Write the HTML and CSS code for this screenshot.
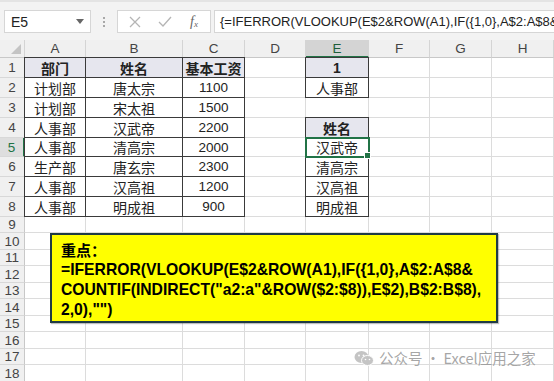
FILE: index.html
```html
<!DOCTYPE html>
<html lang="zh">
<head>
<meta charset="utf-8">
<link rel="stylesheet" href="styles.css">
</head>
<body>
<div class="app">
  <div class="toolbar">
    <div class="namebox"><span>E5</span><svg class="caret" width="8" height="5" viewBox="0 0 8 5"><path d="M0 0h8L4 5z" fill="#666"/></svg></div>
    <div class="grip"><i></i><i></i><i></i></div>
    <div class="fxbox">
      <svg width="12" height="12" viewBox="0 0 12 12"><path d="M1 1l10 10M11 1L1 11" stroke="#b5b5b5" stroke-width="1.3" fill="none"/></svg>
      <svg width="14" height="12" viewBox="0 0 14 12"><path d="M1 6l4 4 8-9" stroke="#b5b5b5" stroke-width="1.3" fill="none"/></svg>
      <span class="fx">f<sub>x</sub></span>
    </div>
    <div class="formula">{=IFERROR(VLOOKUP(E$2&amp;ROW(A1),IF({1,0},A$2:A$8&amp;COUNTIF(INDIRECT("a2:a"&amp;ROW($2:$8)),E$2),B$2:B$8),2,0),"")}</div>
  </div>

  <div class="sheet">
    <div class="corner"><svg width="10" height="10" viewBox="0 0 10 10"><path d="M10 0v10H0z" fill="#c4c4c4"/></svg></div>
    <div class="ch">A</div><div class="ch">B</div><div class="ch">C</div><div class="ch">D</div><div class="ch sel">E</div><div class="ch">F</div><div class="ch">G</div><div class="ch">H</div>

    <div class="rh">1</div><div class="c t th l tp">部门</div><div class="c t th tp">姓名</div><div class="c t th tp">基本工资</div><div class="c"></div><div class="c t th l tp n b">1</div><div class="c"></div><div class="c"></div><div class="c"></div>
    <div class="rh">2</div><div class="c t l">计划部</div><div class="c t">唐太宗</div><div class="c t n">1100</div><div class="c"></div><div class="c t l">人事部</div><div class="c"></div><div class="c"></div><div class="c"></div>
    <div class="rh">3</div><div class="c t l">计划部</div><div class="c t">宋太祖</div><div class="c t n">1500</div><div class="c"></div><div class="c"></div><div class="c"></div><div class="c"></div><div class="c"></div>
    <div class="rh">4</div><div class="c t l">人事部</div><div class="c t">汉武帝</div><div class="c t n">2200</div><div class="c"></div><div class="c t th l tp">姓名</div><div class="c"></div><div class="c"></div><div class="c"></div>
    <div class="rh rsel">5</div><div class="c t l">人事部</div><div class="c t">清高宗</div><div class="c t n">2000</div><div class="c"></div><div class="c t l active">汉武帝</div><div class="c"></div><div class="c"></div><div class="c"></div>
    <div class="rh">6</div><div class="c t l">生产部</div><div class="c t">唐玄宗</div><div class="c t n">2300</div><div class="c"></div><div class="c t l">清高宗</div><div class="c"></div><div class="c"></div><div class="c"></div>
    <div class="rh">7</div><div class="c t l">人事部</div><div class="c t">汉高祖</div><div class="c t n">1200</div><div class="c"></div><div class="c t l">汉高祖</div><div class="c"></div><div class="c"></div><div class="c"></div>
    <div class="rh">8</div><div class="c t l">人事部</div><div class="c t">明成祖</div><div class="c t n">900</div><div class="c"></div><div class="c t l">明成祖</div><div class="c"></div><div class="c"></div><div class="c"></div>
    <div class="rh">9</div><div class="c"></div><div class="c"></div><div class="c"></div><div class="c"></div><div class="c"></div><div class="c"></div><div class="c"></div><div class="c"></div>
    <div class="rh">10</div><div class="c"></div><div class="c"></div><div class="c"></div><div class="c"></div><div class="c"></div><div class="c"></div><div class="c"></div><div class="c"></div>
    <div class="rh">11</div><div class="c"></div><div class="c"></div><div class="c"></div><div class="c"></div><div class="c"></div><div class="c"></div><div class="c"></div><div class="c"></div>
    <div class="rh">12</div><div class="c"></div><div class="c"></div><div class="c"></div><div class="c"></div><div class="c"></div><div class="c"></div><div class="c"></div><div class="c"></div>
    <div class="rh">13</div><div class="c"></div><div class="c"></div><div class="c"></div><div class="c"></div><div class="c"></div><div class="c"></div><div class="c"></div><div class="c"></div>
    <div class="rh">14</div><div class="c"></div><div class="c"></div><div class="c"></div><div class="c"></div><div class="c"></div><div class="c"></div><div class="c"></div><div class="c"></div>
    <div class="rh">15</div><div class="c"></div><div class="c"></div><div class="c"></div><div class="c"></div><div class="c"></div><div class="c"></div><div class="c"></div><div class="c"></div>
    <div class="rh">16</div><div class="c"></div><div class="c"></div><div class="c"></div><div class="c"></div><div class="c"></div><div class="c"></div><div class="c"></div><div class="c"></div>
    <div class="rh">17</div><div class="c"></div><div class="c"></div><div class="c"></div><div class="c"></div><div class="c"></div><div class="c"></div><div class="c"></div><div class="c"></div>
    <div class="rh">18</div><div class="c"></div><div class="c"></div><div class="c"></div><div class="c"></div><div class="c"></div><div class="c"></div><div class="c"></div><div class="c"></div>
  </div>

  <div class="note">
    <div class="note-title">重点：</div>
    <div>=IFERROR(VLOOKUP(E$2&amp;ROW(A1),IF({1,0},A$2:A$8&amp;</div>
    <div>COUNTIF(INDIRECT("a2:a"&amp;ROW($2:$8)),E$2),B$2:B$8),</div>
    <div>2,0),"")</div>
  </div>

  <div class="watermark">
    <svg width="20" height="17" viewBox="0 0 20 17"><ellipse cx="7.5" cy="7" rx="7" ry="6" fill="#c4c4c4"/><ellipse cx="13.5" cy="10.5" rx="6" ry="5" fill="#c4c4c4" stroke="#fff" stroke-width="1"/><circle cx="5" cy="5.5" r="0.9" fill="#fff"/><circle cx="9.5" cy="5.5" r="0.9" fill="#fff"/><circle cx="11.5" cy="9.5" r="0.8" fill="#fff"/><circle cx="15.5" cy="9.5" r="0.8" fill="#fff"/></svg>
    <span>公众号 · Excel应用之家</span>
  </div>
</div>
</body>
</html>
```
FILE: styles.css
```css
* { box-sizing: border-box; }
html, body { margin: 0; padding: 0; }
body { width: 554px; height: 381px; overflow: hidden; background: #fff; font-family: "Liberation Sans", "Noto Sans CJK SC", sans-serif; }
.app { position: relative; width: 554px; height: 381px; overflow: hidden; }

.toolbar { height: 40px; background: #f3f3f3; border-top: 2px solid #e4e4e4; display: flex; align-items: flex-start; padding-top: 8px; }
.namebox { margin-left: 4px; width: 87px; height: 23px; background: #fff; border: 1px solid #d6d6d6; display: flex; align-items: center; justify-content: space-between; padding: 0 6px 0 6px; font-size: 14px; color: #222; }
.grip { width: 26px; height: 23px; display: flex; flex-direction: column; align-items: center; justify-content: center; gap: 2px; }
.grip i { display: block; width: 2px; height: 2px; background: #a8a8a8; }
.fxbox { width: 94px; height: 23px; background: #fff; border: 1px solid #d6d6d6; display: flex; align-items: center; padding-left: 11px; gap: 17px; }
.fx { font-family: "Liberation Serif", serif; font-style: italic; font-size: 14px; color: #666; margin-left: 1px; }
.fx sub { font-size: 9px; vertical-align: -1px; }
.formula { margin-left: 3px; flex: 1; min-width: 0; height: 23px; background: #fff; border: 1px solid #d6d6d6; border-right: none; padding-left: 5px; font-size: 13px; line-height: 21px; color: #222; white-space: nowrap; overflow: hidden; }

.sheet { display: grid; grid-template-columns: 25px 61px 97px 62px 61px 63px 61px 62px 62px; grid-template-rows: 18px 20px 20px 20px 20px 19px 20px 20px 20px 16px 17px 16px 17px 16px 17px 16px 17px 16px 17px; }
.corner { background: #f0f0f0; border-right: 1px solid #d4d4d4; border-bottom: 1px solid #c8c8c8; display: flex; align-items: flex-end; justify-content: flex-end; padding: 0 3px 3px 0; }
.ch { background: #f0f0f0; border-right: 1px solid #d4d4d4; border-bottom: 1px solid #c8c8c8; display: flex; align-items: center; justify-content: center; font-size: 13.5px; color: #444; }
.ch.sel { background: #d4d4d4; border-bottom: 2px solid #217346; color: #1d5e3a; }
.rh { background: #f0f0f0; border-right: 1px solid #c8c8c8; border-bottom: 1px solid #d8d8d8; display: flex; align-items: center; justify-content: center; font-size: 13.5px; color: #444; }
.rh.rsel { background: #dedede; border-right: 2px solid #217346; color: #217346; }
.c { border-right: 1px solid #dcdcdc; border-bottom: 1px solid #dcdcdc; display: flex; align-items: center; justify-content: center; font-size: 14px; color: #222; font-family: "Noto Sans CJK SC", sans-serif; }
.c.t { border-right-color: #3a3a3a; border-bottom-color: #3a3a3a; }
.c.t.l { box-shadow: -1px 0 0 #3a3a3a; }
.c.t.tp { box-shadow: 0 -1px 0 #3a3a3a; }
.c.t.l.tp { box-shadow: -1px 0 0 #3a3a3a, 0 -1px 0 #3a3a3a, -1px -1px 0 #3a3a3a; }
.c.th { background: #e6e6ee; font-weight: 700; }
.c.n { font-family: "Liberation Sans", sans-serif; font-size: 13.5px; }
.c.b { font-weight: 700; font-size: 14px; }
.c.active { position: relative; outline: 2px solid #217346; outline-offset: -1px; }
.c.active::after { content: ""; position: absolute; right: -3px; bottom: -3px; width: 5px; height: 5px; background: #217346; border: 1px solid #fff; }

.note { position: absolute; left: 50px; top: 233px; width: 448px; height: 90px; background: #ffff00; border: 2px solid #1f3b44; box-shadow: 1px 1px 1px rgba(0,0,0,0.25); padding: 5px 0 0 9px; font-family: "Liberation Sans", "Noto Sans CJK SC", sans-serif; font-weight: 700; font-size: 15.7px; line-height: 20px; color: #000; white-space: nowrap; }
.note-title { font-family: "Noto Sans CJK SC", sans-serif; font-size: 15px; }

.watermark { position: absolute; left: 354px; top: 348px; display: flex; align-items: center; gap: 5px; color: rgba(150,150,150,0.85); font-family: "Noto Sans CJK SC", sans-serif; font-size: 14.5px; line-height: 20px; }
```
